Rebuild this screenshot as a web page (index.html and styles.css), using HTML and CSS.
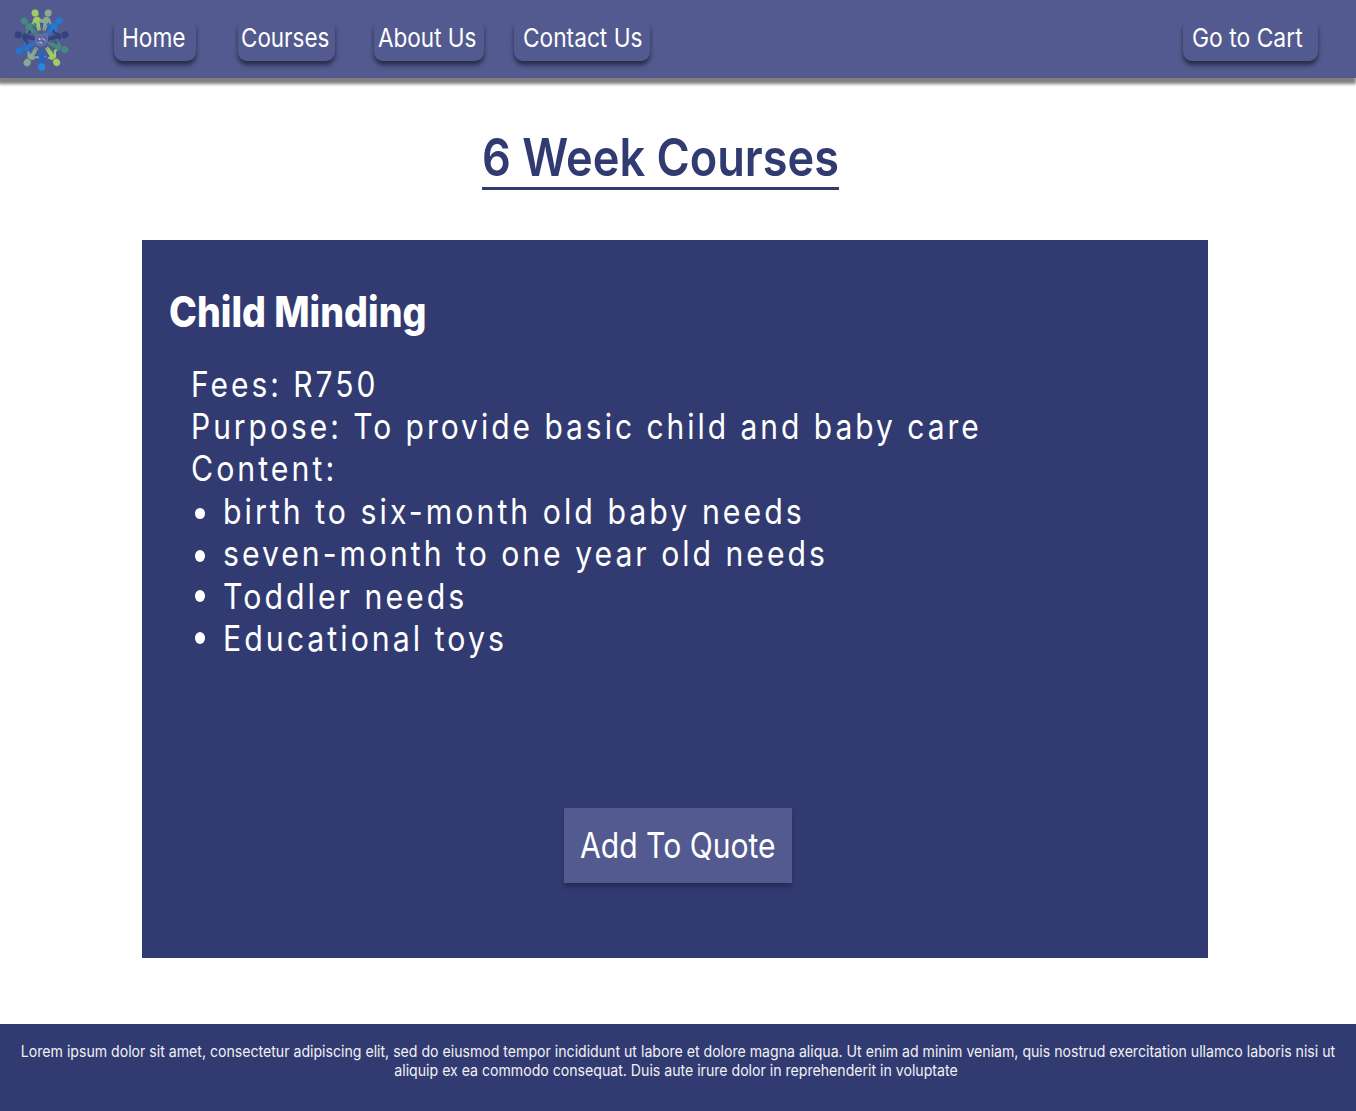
FILE: index.html
```html
<!DOCTYPE html>
<html lang="en">
<head>
<meta charset="utf-8">
<title>6 Week Courses</title>
<link rel="stylesheet" href="styles.css">
</head>
<body>
<header class="topbar">
  <svg class="logo" viewBox="36 20 178 196" aria-hidden="true">
    <defs>
      <g id="person">
        <ellipse cx="0" cy="-80" rx="10.5" ry="11"/>
        <path d="M-8-66Q0-70 8-66L16-53L23-50L20-45L11-49L7-55L5-27L1-25L0-42L-1-25L-5-27L-7-55L-11-49L-20-45L-23-50L-16-53Z"/>
      </g>
    </defs>
    <g transform="translate(125 120)">
      <use href="#person" fill="#a2ca66" transform="rotate(-13.5) translate(0 -4)"/>
      <use href="#person" fill="#88a994" transform="rotate(13.5) translate(0 -4)"/>
      <use href="#person" fill="#2378d4" transform="rotate(42) translate(0 2)"/>
      <use href="#person" fill="#35427e" transform="rotate(77) translate(0 8)"/>
      <use href="#person" fill="#46897f" transform="rotate(112) translate(0 5)"/>
      <use href="#person" fill="#a2ca66" transform="rotate(146)"/>
      <use href="#person" fill="#2365c4" transform="rotate(180)"/>
      <use href="#person" fill="#88a994" transform="rotate(213)"/>
      <use href="#person" fill="#2872cf" transform="rotate(245) translate(0 6)"/>
      <use href="#person" fill="#35427e" transform="rotate(283) translate(0 8)"/>
      <use href="#person" fill="#46897f" transform="rotate(318) translate(0 2)"/>
      <ellipse cx="0" cy="80" rx="10.5" ry="11" fill="#2c86e0"/>
      <path d="M-18-13L-8-18L2-16L12-21L18-12L16 6L8 14L-2 18L-14 12L-19 1Z" fill="#5965a0" stroke="#8195c4" stroke-width="1.5"/>
      <path d="M-10-8L-3-3L4-9M-13 8L-4 5L3 11M8-4L12 4" fill="none" stroke="#b8c4df" stroke-width="2"/>
      <circle cx="-7" cy="-3" r="2.3" fill="#e5d7d5"/>
      <circle cx="5" cy="-3" r="2.3" fill="#d8a9a0"/>
      <circle cx="-2" cy="7" r="2" fill="#d9dfef"/>
    </g>
  </svg>
  <nav class="nav">
    <a class="pill home"><span>Home</span></a>
    <a class="pill courses"><span>Courses</span></a>
    <a class="pill about"><span>About Us</span></a>
    <a class="pill contact"><span>Contact Us</span></a>
  </nav>
  <a class="pill cart"><span>Go to Cart</span></a>
</header>
<main class="main">
  <h1 class="title"><span>6 Week Courses</span></h1>
  <section class="card">
    <h2 class="course"><span>Child Minding</span></h2>
    <div class="details">
      <p class="line fees"><span>Fees: R750</span></p>
      <p class="line purpose"><span>Purpose: To provide basic child and baby care</span></p>
      <p class="line"><span>Content:</span></p>
      <ul class="topics">
        <li class="line"><span>birth to six-month old baby needs</span></li>
        <li class="line seven"><span>seven-month to one year old needs</span></li>
        <li class="line raised"><span>Toddler needs</span></li>
        <li class="line raised"><span>Educational toys</span></li>
      </ul>
    </div>
    <a class="quote"><span>Add To Quote</span></a>
  </section>
</main>
<footer class="footer">
  <p>Lorem ipsum dolor sit amet, consectetur adipiscing elit, sed do eiusmod tempor incididunt ut labore et dolore magna aliqua. Ut enim ad minim veniam, quis nostrud exercitation ullamco laboris nisi ut<br>aliquip ex ea commodo consequat. Duis aute irure dolor in reprehenderit in voluptate&nbsp;</p>
</footer>
</body>
</html>
```

FILE: styles.css
```css
* { box-sizing: border-box; margin: 0; padding: 0; }

body {
  height: 1111px;
  display: flex;
  flex-direction: column;
  background: #fff;
  color: #fff;
  font-family: Inter, sans-serif;
  overflow: hidden;
}

/* Condensed lettering */
span {
  display: inline-block;
  white-space: nowrap;
  transform: scaleX(var(--squeeze, 0.873));
  transform-origin: 0 0;
}

.topbar {
  flex: none;
  height: 78px;
  display: flex;
  align-items: flex-start;
  padding: 0 38px 0 12px;
  background: #525a8f;
  box-shadow: -1px 5px 3px 1px rgba(0, 0, 0, 0.5);
}

.logo { flex: none; width: 59.3px; height: 65.3px; margin-top: 6.7px; }

.nav { display: flex; margin-left: 42.4px; }

.pill {
  height: 42px;
  margin-top: 19px;
  padding-top: 2.5px;
  border-radius: 9px;
  background: #525a8f;
  box-shadow: 0 4px 4px rgba(0, 0, 0, 0.5);
  font-size: 26px;
  line-height: 31.5px;
}

.home { width: 82.3px; padding-left: 8.5px; --squeeze: 0.873; }
.courses { width: 96.5px; margin-left: 42.5px; padding-left: 2.3px; --squeeze: 0.863; }
.about { width: 110px; margin-left: 39px; padding-left: 4px; --squeeze: 0.866; }
.contact { width: 135.7px; margin-left: 30.2px; padding-left: 9.3px; --squeeze: 0.873; }
.cart { width: 135px; margin-left: auto; padding-left: 9px; --squeeze: 0.88; }

.main { flex: none; height: 946px; padding: 47px 148px 0 142px; }

.title {
  width: 357px;
  height: 64.5px;
  margin-left: 340px;
  padding-top: 1px;
  border-bottom: 3.5px solid #313b72;
  color: #313b72;
  font-size: 52px;
  font-weight: 600;
  line-height: 63px;
  --squeeze: 0.868;
}

.card {
  display: flex;
  flex-direction: column;
  height: 718.5px;
  margin-top: 50px;
  padding: 46px 0 75px;
  background: #313b72;
}

.course {
  height: 51px;
  padding-left: 27.2px;
  font-size: 42px;
  font-weight: 800;
  line-height: 51px;
  --squeeze: 0.894;
}

.details {
  margin-top: 26.3px;
  padding-left: 48.8px;
  font-size: 35px;
  line-height: 42.35px;
  letter-spacing: 3.5px;
  --squeeze: 0.865;
}

.line { height: 42.35px; }
.fees { --squeeze: 0.856; }
.purpose { --squeeze: 0.856; }
.seven { --squeeze: 0.861; }

.topics { list-style: none; }
.topics .line { display: flex; }
.topics .line::before {
  content: "";
  width: 10px;
  height: 11.5px;
  margin: 18px 17.9px 0 4.2px;
  border-radius: 50%;
  background: #fff;
}
.topics .raised::before { margin-top: 15.6px; }

.quote {
  width: 228px;
  height: 75px;
  margin: auto 0 0 422px;
  padding: 15.5px 0 0 15.8px;
  background: #525a8f;
  box-shadow: 0 4px 4px rgba(0, 0, 0, 0.25);
  font-size: 35px;
  line-height: 42.35px;
  --squeeze: 0.86;
}

.footer {
  flex: 1;
  padding-top: 18px;
  background: #313b72;
  color: #f1f1f4;
}

.footer p {
  width: 1537.4px;
  font-size: 16px;
  line-height: 19.3px;
  text-align: center;
  white-space: nowrap;
  transform: scaleX(0.882);
  transform-origin: 0 0;
}
```
